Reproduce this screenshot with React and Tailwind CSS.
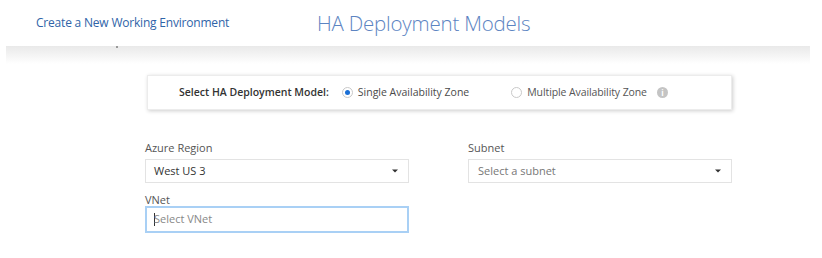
function Caret() {
  return (
    <svg width="6" height="4" viewBox="0 0 6 4" className="shrink-0">
      <path d="M0 0.5 H6 L3 3.5 Z" fill="#333" />
    </svg>
  )
}

function Radio({ checked }) {
  return (
    <span className="w-[11px] h-[11px] rounded-full border border-[#c9c9c9] bg-white flex items-center justify-center shrink-0">
      {checked && <span className="w-[5px] h-[5px] rounded-full bg-[#1a6fd6]" />}
    </span>
  )
}

export default function App() {
  return (
    <div className="w-[822px] h-[258px] bg-white overflow-hidden font-['Open_Sans',sans-serif] text-[#404040]">
      {/* header */}
      <div className="h-[46px] flex items-center">
        <span className="pl-[36px] w-[317px] text-[12px] text-[#2f64a8] tracking-[-0.2px]">
          Create a New Working Environment
        </span>
        <span className="text-[20.5px] font-light text-[#5c84c2] tracking-[-0.2px]">
          HA Deployment Models
        </span>
      </div>
      <div className="mx-[6px] w-[804px] h-[18px] bg-gradient-to-b from-[#e9e9e9] to-white relative">
        <span className="absolute left-[110px] top-0 w-[2px] h-[2px] bg-[#999]" />
      </div>

      {/* deployment model card */}
      <div className="ml-[147px] mt-[11px] w-[585px] h-[35px] bg-white shadow-[1px_1px_4px_rgba(0,0,0,0.2)] border border-[#ececec] flex items-center text-[10.5px]">
        <span className="ml-[31px] font-semibold text-[#333]">Select HA Deployment Model:</span>
        <label className="ml-[13px] flex items-center gap-[5px] text-[#4a4a4a]">
          <Radio checked />
          Single Availability Zone
        </label>
        <label className="ml-[42px] flex items-center gap-[5px] text-[#555] tracking-[-0.1px]">
          <Radio />
          Multiple Availability Zone
          <span className="ml-[5px] w-[11px] h-[11px] rounded-full bg-[#c4c4c4] text-white text-[8px] font-bold leading-none flex items-center justify-center">
            i
          </span>
        </label>
      </div>

      {/* form */}
      <div className="ml-[145px] mt-[31px] grid grid-cols-[264px_264px] gap-x-[59px] text-[11px]">
        <div>
          <div className="text-[#555] leading-[14px]">Azure Region</div>
          <div className="mt-[4px] h-[24px] border border-[#e3e3e3] flex items-center justify-between pl-[8px] pr-[10px] text-[#333]">
            <span>West US 3</span>
            <Caret />
          </div>
        </div>
        <div>
          <div className="text-[#555] leading-[14px]">Subnet</div>
          <div className="mt-[4px] h-[24px] border border-[#e3e3e3] flex items-center justify-between pl-[9px] pr-[10px] text-[#777]">
            <span>Select a subnet</span>
            <Caret />
          </div>
        </div>
        <div className="mt-[10px]">
          <div className="text-[#555] leading-[14px]">VNet</div>
          <div className="mt-[-1px] h-[27px] border-2 border-[#a9d0f5] flex items-center pl-[7px] text-[#888]">
            <span className="w-px h-[13px] bg-[#333] mr-[-1px]" />
            <span>Select VNet</span>
          </div>
        </div>
      </div>
    </div>
  )
}
